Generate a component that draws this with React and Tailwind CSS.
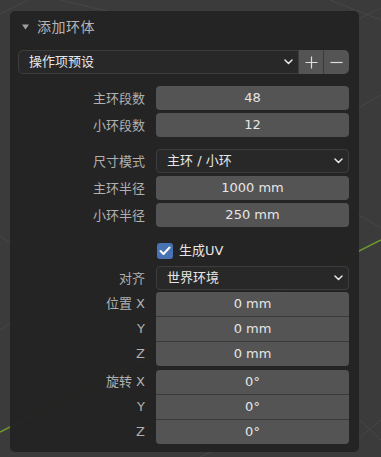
import React from 'react';

const font = { fontFamily: '"DejaVu Sans", "Noto Sans CJK SC", sans-serif' };

const Chevron = () => (
  <svg width="9" height="6" viewBox="0 0 9 6" className="shrink-0">
    <path d="M1 1 L4.5 4.5 L8 1" fill="none" stroke="#e6e6e6" strokeWidth="1.5" strokeLinecap="round" strokeLinejoin="round" />
  </svg>
);

const Label = ({ children }) => (
  <div className="w-[138px] shrink-0 pr-[11px] text-right text-[13px] text-[#b0b0b0] leading-none">{children}</div>
);

const NumField = ({ label, value, className = '' }) => (
  <div className={`flex items-center ${className}`}>
    <Label>{label}</Label>
    <div className="flex-1 h-[24px] rounded-[4px] bg-[#545454] flex items-center justify-center text-[13px] text-[#e6e6e6]">
      {value}
    </div>
  </div>
);

const Select = ({ label, value, className = '' }) => (
  <div className={`flex items-center ${className}`}>
    <Label>{label}</Label>
    <div className="flex-1 h-[24px] rounded-[4px] bg-[#282828] border border-[#3d3d3d] flex items-center justify-between pl-[10px] pr-[5px] text-[13px] text-[#e6e6e6]">
      <span>{value}</span>
      <Chevron />
    </div>
  </div>
);

const Stack = ({ label, rows, className = '' }) => (
  <div className={`flex ${className}`}>
    <div className="w-[138px] shrink-0 flex flex-col gap-[1px]">
      {rows.map((r, i) => (
        <div key={i} className="h-[24px] pr-[11px] flex items-center justify-end text-[13px] text-[#b0b0b0]">
          {i === 0 ? `${label} ${r.axis}` : r.axis}
        </div>
      ))}
    </div>
    <div className="flex-1 flex flex-col gap-[1px] bg-[#3a3a3a] rounded-[4px] overflow-hidden">
      {rows.map((r, i) => (
        <div key={i} className="h-[24px] bg-[#545454] flex items-center justify-center text-[13px] text-[#e6e6e6]">
          {r.value}
        </div>
      ))}
    </div>
  </div>
);

export default function App() {
  return (
    <div className="relative w-[381px] h-[457px] bg-[#3b3b3b] overflow-hidden" style={font}>
      <svg className="absolute inset-0" width="381" height="457">
        <g stroke="#474747" strokeWidth="1">
          <line x1="0" y1="14" x2="40" y2="-6" />
          <line x1="60" y1="0" x2="120" y2="14" />
          <line x1="330" y1="0" x2="381" y2="20" />
          <line x1="381" y1="8" x2="340" y2="28" />
          <line x1="359" y1="215" x2="381" y2="228" />
          <line x1="381" y1="95" x2="355" y2="110" />
          <line x1="0" y1="236" x2="12" y2="244" />
          <line x1="0" y1="330" x2="12" y2="322" />
          <line x1="359" y1="438" x2="381" y2="420" />
          <line x1="360" y1="420" x2="381" y2="440" />
          <line x1="200" y1="457" x2="215" y2="450" />
        </g>
        <line x1="0" y1="432" x2="381" y2="240" stroke="#6f9a2c" strokeWidth="1.5" />
      </svg>

      <div className="absolute left-[10px] top-[11px] w-[349px] h-[441px] rounded-[5px] bg-[#232323]/[0.97] pl-[8px] pr-[10px]">
        <div className="h-[29px] flex items-center pl-[4px] pt-[3px]">
          <svg width="7" height="6" viewBox="0 0 7 6" className="mr-[8px]">
            <polygon points="0,0.5 7,0.5 3.5,5.5" fill="#a0a0a0" />
          </svg>
          <span className="text-[14px] text-[#b5b5b5] tracking-[0.5px]">添加环体</span>
        </div>

        <div className="mt-[10px] flex h-[24px]">
          <div className="flex-1 rounded-l-[5px] bg-[#282828] border border-[#3d3d3d] flex items-center justify-between pl-[10px] pr-[5px] text-[13px] text-[#e6e6e6]">
            <span>操作项预设</span>
            <Chevron />
          </div>
          <div className="w-[25px] bg-[#545454] flex items-center justify-center border-r border-[#3a3a3a]">
            <svg width="13" height="13" viewBox="0 0 13 13">
              <path d="M6.5 0.5 V12.5 M0.5 6.5 H12.5" stroke="#dedede" strokeWidth="1.2" />
            </svg>
          </div>
          <div className="w-[25px] bg-[#545454] rounded-r-[5px] flex items-center justify-center">
            <svg width="13" height="13" viewBox="0 0 13 13">
              <path d="M0.5 6.5 H12.5" stroke="#dedede" strokeWidth="1.2" />
            </svg>
          </div>
        </div>

        <NumField className="mt-[12px]" label="主环段数" value="48" />
        <NumField className="mt-[3px]" label="小环段数" value="12" />

        <Select className="mt-[12px]" label="尺寸模式" value="主环 / 小环" />
        <NumField className="mt-[3px]" label="主环半径" value="1000 mm" />
        <NumField className="mt-[3px]" label="小环半径" value="250 mm" />

        <div className="mt-[12px] h-[24px] flex items-center pl-[139px]">
          <div className="w-[16px] h-[16px] rounded-[3px] bg-[#4772b3] flex items-center justify-center">
            <svg width="12" height="10" viewBox="0 0 12 10">
              <path d="M1.5 5 L4.5 8 L10.5 1.5" fill="none" stroke="#ffffff" strokeWidth="2" strokeLinecap="round" strokeLinejoin="round" />
            </svg>
          </div>
          <span className="ml-[6px] text-[13px] text-[#e6e6e6]">生成UV</span>
        </div>

        <Select className="mt-[3px]" label="对齐" value="世界环境" />

        <Stack
          className="mt-[2px]"
          label="位置"
          rows={[
            { axis: 'X', value: '0 mm' },
            { axis: 'Y', value: '0 mm' },
            { axis: 'Z', value: '0 mm' },
          ]}
        />
        <Stack
          className="mt-[4px]"
          label="旋转"
          rows={[
            { axis: 'X', value: '0°' },
            { axis: 'Y', value: '0°' },
            { axis: 'Z', value: '0°' },
          ]}
        />
      </div>
    </div>
  );
}
